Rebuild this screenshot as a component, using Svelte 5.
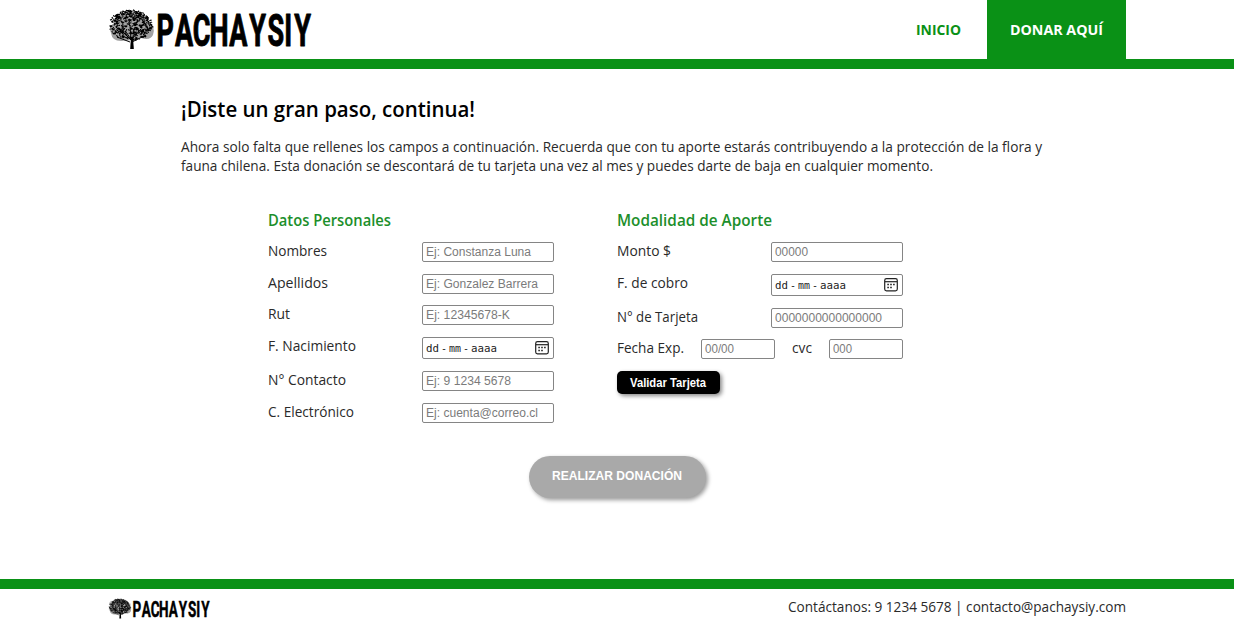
<script>
  const personal = [
    { label: 'Nombres', hint: 'Ej: Constanza Luna', w: 59, hw: 105 },
    { label: 'Apellidos', hint: 'Ej: Gonzalez Barrera', w: 60, hw: 112 },
    { label: 'Rut', hint: 'Ej: 12345678-K', w: 22, hw: 84 },
    { label: 'F. Nacimiento', date: true, w: 88 },
    { label: 'N° Contacto', hint: 'Ej: 9 1234 5678', w: 78, hw: 85 },
    { label: 'C. Electrónico', hint: 'Ej: cuenta@correo.cl', w: 86, hw: 112 }
  ];
  const aporte = [
    { label: 'Monto $', hint: '00000', w: 54, hw: 33 },
    { label: 'F. de cobro', date: true, w: 71 },
    { label: 'N° de Tarjeta', hint: '0000000000000000', w: 81, hw: 107 }
  ];

  // Left edge of every letter of the wordmark, before the horizontal squeeze.
  const squeeze = 0.6;
  const starts = [48.6, 67, 84.8, 101.4, 121.2, 141.2, 159.6, 176.2, 186.2].map((x) => (x / squeeze).toFixed(1)).join(' ');

  // Leaf strokes scattered over the crown of the tree.
  let seed = 7;
  const rnd = () => (seed = (seed * 16807) % 2147483647) / 2147483647;
  const leaves = Array.from({ length: 420 }, () => {
    const a = rnd() * Math.PI * 2;
    const r = Math.pow(rnd(), 0.45);
    const x = 23 + Math.cos(a) * r * 21.5;
    const y = 18 + Math.sin(a) * r * (Math.sin(a) > 0 ? 14 : 16);
    return `M${x.toFixed(1)} ${y.toFixed(1)}l${(rnd() * 3 - 1.5).toFixed(1)} ${(rnd() * 2 - 1).toFixed(1)}`;
  }).join('');
</script>

{#snippet line(text, width, size, baseline, height, weight = 400)}
  <svg class="line" {width} {height} aria-label={text}>
    <text x="0" y={baseline} textLength={width} font-size={size} font-weight={weight} lengthAdjust="spacingAndGlyphs">{text}</text>
  </svg>
{/snippet}

{#snippet logo()}
  <svg class="logo" viewBox="0 0 205 42" role="img" aria-label="Pachaysiy">
    <path d="M3 25Q0 19 6 15Q7 7 15 6Q22-1 30 4Q39 6 40 13Q48 18 45 27Q42 33 33 30L25 32L13 33Q4 33 3 25Z" fill="#555" opacity=".55" />
    <path d={leaves} fill="none" stroke="#000" stroke-width="1.1" stroke-linecap="round" />
    <path d="M23 32L14 23M23 32L22 17M24 31L33 21M24 34L38 27M22 34L9 29" fill="none" stroke="#000" stroke-width="1" />
    <path d="M23 29h2l.8 12h-3.6z" fill="#000" />
    <text x={starts} y="38" transform="scale({squeeze} 1)">PACHAYSIY</text>
  </svg>
{/snippet}

{#snippet field(f)}
  <div class="row" class:tall={f.date}>
    <span class="label">{@render line(f.label, f.w, 14, 15.6, 20)}</span>
    {#if f.date}
      <div class="box date">
        {@render line('dd', 13, 10.5, 10.6, 14)}
        {@render line('-', 6, 10.5, 10.6, 14)}
        {@render line('mm', 12, 10.5, 10.6, 14)}
        {@render line('-', 6, 10.5, 10.6, 14)}
        {@render line('aaaa', 26, 10.5, 10.6, 14)}
        <svg class="cal" width="14" height="14" viewBox="0 0 14 14" fill="none" stroke="#222" aria-hidden="true">
          <rect x=".7" y=".7" width="12.6" height="12.2" rx="1.8" stroke-width="1.2" />
          <path d="M1 3.7h12" stroke-width="1.2" />
          <path d="M3.3 6.6h1.6M6.2 6.6h1.6M9.1 6.6h1.6M3.3 9.4h1.6M6.2 9.4h1.6" stroke-width="1.5" />
        </svg>
      </div>
    {:else}
      <div class="box">{@render line(f.hint, f.hw, 12, 12, 17)}</div>
    {/if}
  </div>
{/snippet}

<div class="page">
  <header>
    {@render logo()}
    <nav>
      <a class="home" href="#inicio">{@render line('INICIO', 45, 13.5, 15, 20, 700)}</a>
      <a class="give" href="#donar">{@render line('DONAR AQUÍ', 93, 13.5, 15, 20, 700)}</a>
    </nav>
  </header>

  <main>
    <h1>{@render line('¡Diste un gran paso, continua!', 294, 21, 22, 32, 600)}</h1>
    <p>
      {@render line('Ahora solo falta que rellenes los campos a continuación. Recuerda que con tu aporte estarás contribuyendo a la protección de la flora y', 861, 14, 15.2, 19)}
      {@render line('fauna chilena. Esta donación se descontará de tu tarjeta una vez al mes y puedes darte de baja en cualquier momento.', 752, 14, 15.2, 19)}
    </p>

    <form>
      <section>
        <h2>{@render line('Datos Personales', 123, 15.5, 16.6, 22, 600)}</h2>
        {#each personal as f}{@render field(f)}{/each}
      </section>
      <section>
        <h2>{@render line('Modalidad de Aporte', 155, 15.5, 16.6, 22, 600)}</h2>
        {#each aporte as f}{@render field(f)}{/each}
        <div class="row card">
          <span class="label">{@render line('Fecha Exp.', 67, 14, 15.6, 20)}</span>
          <div class="box short">{@render line('00/00', 29, 12, 12, 17)}</div>
          <span class="label cvc">{@render line('cvc', 20, 14, 15.6, 20)}</span>
          <div class="box short">{@render line('000', 19, 12, 12, 17)}</div>
        </div>
        <button type="button" class="check">{@render line('Validar Tarjeta', 76, 12, 12.4, 16, 700)}</button>
      </section>
    </form>
    <button type="button" class="send">{@render line('REALIZAR DONACIÓN', 130, 12, 12.4, 18, 700)}</button>
  </main>

  <footer>
    {@render logo()}
    {@render line('Contáctanos: 9 1234 5678 | contacto@pachaysiy.com', 338, 14, 15.6, 20)}
  </footer>
</div>

<style>
  :global(body) { margin: 0; background: #fff; }
  .page {
    display: flex; flex-direction: column; height: 627px; overflow: hidden;
    font-family: 'Open Sans', 'Noto Sans', sans-serif; color: #2a2a2a;
  }
  .line { display: block; overflow: visible; fill: currentColor; flex: none; }
  header {
    box-sizing: border-box; height: 69px; padding: 0 108px; display: flex;
    justify-content: space-between; border-bottom: 10px solid #0a9116; flex: none;
  }
  .logo { display: block; width: 205px; height: 42px; margin-top: 8px; overflow: visible; }
  .logo text {
    font: 700 45px Roboto, sans-serif; stroke: #000; stroke-width: 1; stroke-linejoin: round;
  }
  nav { display: flex; }
  nav a { display: flex; align-items: center; text-decoration: none; height: 59px; }
  .home { color: #0a9116; padding-right: 26px; }
  .give { background: #0a9116; color: #fff; width: 139px; justify-content: center; }
  main { flex: 1; display: flex; flex-direction: column; padding: 26px 181px 0; }
  h1, h2, p { margin: 0; }
  h1 { color: #000; height: 42px; }
  p { height: 72px; }
  form { display: flex; gap: 63px; padding-left: 87px; height: 247px; }
  section { width: 286px; }
  h2 { height: 33px; color: #1c8f2b; }
  .row { display: flex; justify-content: space-between; height: 31.7px; }
  .row.tall { height: 34px; }
  .label { margin-top: -2px; }
  .box {
    box-sizing: border-box; width: 132px; height: 20px; padding: 1px 3px;
    border: 1px solid #858585; border-radius: 2px; color: #7b7b7b; background: #fff;
    font-family: 'Liberation Sans', Arial, sans-serif;
  }
  .date {
    height: 22px; display: flex; align-items: center; gap: 2px; color: #222;
    font-family: 'DejaVu Sans Mono', 'Liberation Mono', monospace; padding: 0 4px 0 3px;
  }
  .cal { margin-left: auto; }
  .box.short { width: 74px; }
  .card .label { width: 67px; }
  .card .label.cvc { width: 20px; }
  button { display: block; border: 0; color: #fff; font-family: 'Liberation Sans', Arial, sans-serif; }
  .check {
    width: 103px; height: 23px; padding: 3px 13px; border-radius: 5px; background: #000;
    box-shadow: 2px 2px 4px #0007;
  }
  .send {
    width: 177px; height: 42px; margin-left: 348px; padding: 12px 23px; border-radius: 21px;
    background: #a9a9a9; box-shadow: 2px 2px 4px #0006;
  }
  footer {
    box-sizing: border-box; height: 48px; border-top: 10px solid #0a9116; padding: 7px 108px 0;
    display: flex; justify-content: space-between; flex: none;
  }
  footer .logo { width: 103px; height: 21px; margin-top: 2px; }
</style>
